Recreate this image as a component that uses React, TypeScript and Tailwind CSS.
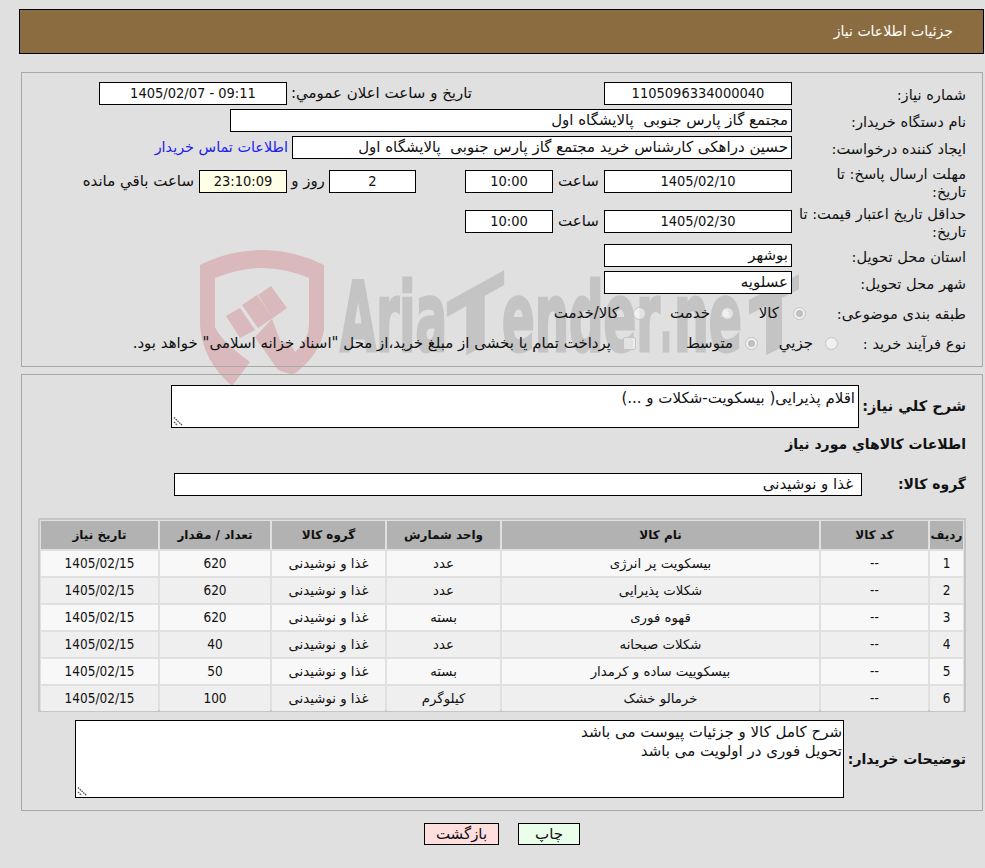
import React from "react";

function Box({ children, className = "", bg = "bg-white", latin }: { children?: React.ReactNode; className?: string; bg?: string; latin?: boolean }) {
  return (
    <div
      dir={latin ? "ltr" : undefined}
      className={`h-[23px] border border-black ${bg} flex items-center shrink-0 whitespace-pre leading-none ${latin ? "justify-center text-[14.5px] font-['DejaVu_Sans_Condensed','DejaVu_Sans',sans-serif]" : "px-[3px] text-[15px]"} ${className}`}
    >
      {children}
    </div>
  );
}

function Grip() {
  return (
    <svg className="absolute left-[1px] bottom-[1px]" width="10" height="9" viewBox="0 0 10 9">
      <path d="M1 0.5 L9.5 8.5 M1 5 L4.5 8.5" stroke="#555" strokeWidth="1.3" strokeDasharray="1.6 0.8" fill="none" />
    </svg>
  );
}

function Radio({ on }: { on?: boolean }) {
  return (
    <span className="w-[13px] h-[13px] rounded-full border border-[#c4c4c4] bg-white/50 flex items-center justify-center shrink-0">
      {on && <span className="w-[7px] h-[7px] rounded-full bg-[#c0c0c0]" />}
    </span>
  );
}

function Label({ children, className = "w-[190px]" }: { children: React.ReactNode; className?: string }) {
  return <div className={`shrink-0 pr-[16px] pt-[2px] text-[14.6px] leading-[18px] text-[#111] whitespace-nowrap ${className}`}>{children}</div>;
}

const rows = [
  ["1", "--", "بیسکویت پر انرژی", "عدد", "620"],
  ["2", "--", "شکلات پذیرایی", "عدد", "620"],
  ["3", "--", "قهوه فوری", "بسته", "620"],
  ["4", "--", "شکلات صبحانه", "عدد", "40"],
  ["5", "--", "بیسکوییت ساده و کرمدار", "بسته", "50"],
  ["6", "--", "خرمالو خشک", "کیلوگرم", "100"],
];

const heads = ["ردیف", "کد کالا", "نام کالا", "واحد شمارش", "گروه کالا", "تعداد / مقدار", "تاریخ نیاز"];
const num = "text-[13.5px] font-['DejaVu_Sans_Condensed','DejaVu_Sans',sans-serif]";

function Watermark() {
  const wm = "font-['DejaVu_Sans_Condensed','DejaVu_Sans',sans-serif]";
  return (
    <svg className="absolute left-[190px] top-[240px] pointer-events-none [direction:ltr]" width="620" height="150" viewBox="0 0 620 150">
      <path
        fill="#d9b9bb"
        fillRule="evenodd"
        d="M10 25 Q40 10 72 10 Q104 10 134 25 L134 90 Q130 115 103 135 L84 100 Q100 100 105 112 Q119 100 119 85 L119 38 Q95 28 72 28 Q49 28 25 38 L25 87 Q30 100 60 122 L42 146 Q12 120 10 85 Z"
      />
      <path fill="#d9b9bb" d="M36 76 L50 68 L65 90 L50 98 Z M52 65 L67 55 L83 78 L68 88 Z M68 55 L81 46 L97 68 L83 78 Z M65 97 L82 79 L103 135 L88 130 Z" />
      <g className={wm} fontWeight="700" fontSize="96" fill="#c4c4c4" stroke="#c4c4c4" strokeWidth="3">
        <text x="150" y="111" textLength="107" lengthAdjust="spacingAndGlyphs">Aria</text>
        <text x="258" y="124" fontSize="84" textLength="55" lengthAdjust="spacingAndGlyphs" transform="translate(258 62) skewY(-29) translate(-258 -62)">T</text>
        <text x="312" y="111" textLength="158" lengthAdjust="spacingAndGlyphs">ender</text>
        <text x="470" y="111" textLength="12" lengthAdjust="spacingAndGlyphs">.</text>
        <text x="484" y="111" textLength="68" lengthAdjust="spacingAndGlyphs">ne</text>
        <text x="560" y="122" fontSize="84" textLength="48" lengthAdjust="spacingAndGlyphs" transform="translate(560 60) skewY(-27) translate(-560 -60)">T</text>
      </g>
    </svg>
  );
}

export default function App() {
  return (
    <div dir="rtl" className="relative w-[985px] h-[868px] overflow-hidden bg-[#e0e0e0] text-[#111] font-['DejaVu_Sans',sans-serif] text-[15px]">
      <Watermark />
      <div className="relative">
        <div className="pt-[9px] pl-[19px] pr-[1px]">
          <div className="h-[45px] bg-[#8b6c41] border border-black flex items-center pr-[30px] text-white text-[14px]">جزئیات اطلاعات نیاز</div>
        </div>

        <div className="ml-[21px] mr-[2px] mt-[18px] h-[295px] border border-[#a8a8a8] pt-[9px]">
          <div className="flex items-center h-[23px]">
            <Label>شماره نیاز:</Label>
            <Box latin className="w-[188px]">1105096334000040</Box>
            <div className="w-[132px] shrink-0" />
            <div className="w-[180px] shrink-0 whitespace-nowrap">تاریخ و ساعت اعلان عمومي:</div>
            <Box latin className="w-[188px] mr-[5px]">1405/02/07 - 09:11</Box>
          </div>
          <div className="flex items-center h-[23px] mt-[4px]">
            <Label>نام دستگاه خریدار:</Label>
            <Box className="w-[562px]">مجتمع گاز پارس جنوبی  پالایشگاه اول</Box>
          </div>
          <div className="flex items-center h-[23px] mt-[4px]">
            <Label>ایجاد کننده درخواست:</Label>
            <Box className="w-[500px]">حسین دراهکی کارشناس خرید مجتمع گاز پارس جنوبی  پالایشگاه اول</Box>
            <a className="text-[#2222ee] mr-[4px] text-[14.4px] whitespace-nowrap">اطلاعات تماس خریدار</a>
          </div>
          <div className="flex items-center h-[23px] mt-[11px]">
            <Label>مهلت ارسال پاسخ: تا<br />تاریخ:</Label>
            <Box latin className="w-[188px]">1405/02/10</Box>
            <div className="w-[51px] shrink-0 text-center whitespace-nowrap">ساعت</div>
            <Box latin className="w-[88px]">10:00</Box>
            <div className="w-[49px] shrink-0" />
            <Box latin className="w-[87px]">2</Box>
            <div className="w-[42px] shrink-0 text-center whitespace-nowrap">روز و</div>
            <Box latin bg="bg-[#ffffe8]" className="w-[88px]">23:10:09</Box>
            <div className="mr-[5px] whitespace-nowrap">ساعت باقي مانده</div>
          </div>
          <div className="flex items-center h-[23px] mt-[17px]">
            <Label>حداقل تاریخ اعتبار قیمت: تا<br />تاریخ:</Label>
            <Box latin className="w-[188px]">1405/02/30</Box>
            <div className="w-[51px] shrink-0 text-center whitespace-nowrap">ساعت</div>
            <Box latin className="w-[88px]">10:00</Box>
          </div>
          <div className="flex items-center h-[23px] mt-[11px]">
            <Label>استان محل تحویل:</Label>
            <Box className="w-[188px]">بوشهر</Box>
          </div>
          <div className="flex items-center h-[23px] mt-[4px]">
            <Label>شهر محل تحویل:</Label>
            <Box className="w-[188px]">عسلویه</Box>
          </div>
          <div className="flex items-center h-[30px] mt-[4px]">
            <Label className="w-[176px]">طبقه بندی موضوعی:</Label>
            <Radio on />
            <div className="w-[18px] mr-[14px] whitespace-nowrap">کالا</div>
            <div className="mr-[27px]"><Radio /></div>
            <div className="w-[39px] mr-[11px] whitespace-nowrap">خدمت</div>
            <div className="mr-[25px]"><Radio /></div>
            <div className="mr-[14px] whitespace-nowrap">کالا/خدمت</div>
          </div>
          <div className="flex items-center h-[30px]">
            <Label className="w-[144px]">نوع فرآیند خرید :</Label>
            <Radio />
            <div className="w-[35px] mr-[12px] whitespace-nowrap">جزیي</div>
            <div className="mr-[20px]"><Radio on /></div>
            <div className="w-[45px] mr-[12px] whitespace-nowrap">متوسط</div>
            <span className="w-[13px] h-[13px] mr-[52px] shrink-0 border border-[#c4c4c4] bg-white/50 rounded-[2px]" />
            <div className="mr-[12px] whitespace-nowrap">پرداخت تمام یا بخشی از مبلغ خرید،از محل "اسناد خزانه اسلامی" خواهد بود.</div>
          </div>
        </div>

        <div className="ml-[21px] mr-[2px] mt-[7px] h-[437px] border border-[#a8a8a8]">
          <div className="flex items-center h-[43px] mt-[10px]">
            <div className="w-[123px] shrink-0 pr-[16px] font-bold text-[14.5px] whitespace-nowrap">شرح كلي نياز:</div>
            <div className="relative w-[688px] h-[43px] bg-white border border-black px-[3px] pt-[2px] text-[15px] leading-[20px]">
              اقلام پذیرایی( بیسکویت-شکلات و ...)
              <Grip />
            </div>
          </div>
          <div className="h-[18px] mt-[7px] pr-[16px] font-bold text-[14px] leading-[18px] whitespace-nowrap">اطلاعات كالاهاي مورد نياز</div>
          <div className="flex items-center h-[23px] mt-[20px]">
            <div className="w-[120px] shrink-0 pr-[16px] font-bold text-[14px] whitespace-nowrap">گروه کالا:</div>
            <Box className="w-[688px] pr-[8px]">غذا و نوشیدنی</Box>
          </div>
          <div className="mr-[16px] mt-[22px] w-[928px] h-[194px] border-2 border-[#c6c6c6]">
            <table className="w-[926px] -m-[1px] border-separate border-spacing-[2px] text-[13.3px] table-fixed">
              <colgroup>
                <col className="w-[33px]" />
                <col className="w-[107px]" />
                <col className="w-[317px]" />
                <col className="w-[113px]" />
                <col className="w-[113px]" />
                <col className="w-[110px]" />
                <col />
              </colgroup>
              <thead>
                <tr>
                  {heads.map((h) => (
                    <th key={h} className="h-[28px] bg-[#b2b2b2] font-bold text-center text-[12px] p-0 whitespace-nowrap">{h}</th>
                  ))}
                </tr>
              </thead>
              <tbody>
                {rows.map((r, i) => {
                  const c = `text-center p-0 ${i % 2 ? "bg-[#efefef]" : "bg-[#f8f8f8]"}`;
                  return (
                    <tr key={r[0]}>
                      <td className={`h-[25px] ${c} ${num}`}>{r[0]}</td>
                      <td className={`${c} ${num}`}>{r[1]}</td>
                      <td className={c}>{r[2]}</td>
                      <td className={c}>{r[3]}</td>
                      <td className={c}>غذا و نوشیدنی</td>
                      <td className={`${c} ${num}`}>{r[4]}</td>
                      <td className={`${c} ${num}`}>1405/02/15</td>
                    </tr>
                  );
                })}
              </tbody>
            </table>
          </div>
          <div className="flex items-center h-[78px] mt-[8px]">
            <div className="w-[138px] shrink-0 pr-[16px] font-bold text-[14px] whitespace-nowrap">توضیحات خریدار:</div>
            <div className="relative w-[769px] h-[78px] bg-white border border-black px-[1px] pt-[2px] text-[15px] leading-[19px]">
              <div>شرح کامل کالا و جزئیات پیوست می باشد</div>
              <div>تحویل فوری در اولویت می باشد</div>
              <Grip />
            </div>
          </div>
        </div>

        <div className="flex justify-center gap-[19px] mt-[12px] pl-[19px]">
          <button className="w-[62px] h-[22px] border border-black bg-[#eaffea] text-[15px] leading-none">چاپ</button>
          <button className="w-[75px] h-[22px] border border-black bg-[#ffdede] text-[15px] leading-none">بازگشت</button>
        </div>
      </div>
    </div>
  );
}
